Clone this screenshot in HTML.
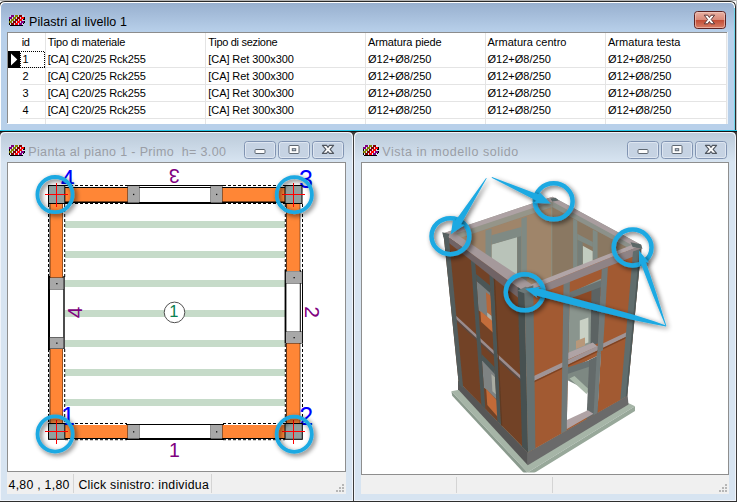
<!DOCTYPE html>
<html><head><meta charset="utf-8"><title>Pilastri al livello 1</title>
<style>
html,body{margin:0;padding:0;background:#fff;overflow:hidden}
#root{position:relative;width:737px;height:502px;overflow:hidden;font-family:'Liberation Sans',sans-serif}
#root svg{position:absolute;left:0;top:0}
.t{position:absolute;white-space:pre;line-height:1;font-family:'Liberation Sans',sans-serif}
</style></head><body><div id="root">
<svg width="737" height="502" viewBox="0 0 737 502">
<defs>
<linearGradient id="gTop" x1="0" y1="0" x2="0" y2="1"><stop offset="0" stop-color="#98b0cf"/><stop offset="1" stop-color="#b8d0ea"/></linearGradient>
<linearGradient id="gChild" x1="0" y1="0" x2="0" y2="1"><stop offset="0" stop-color="#bccbda"/><stop offset="1" stop-color="#d7e4f1"/></linearGradient>
<linearGradient id="gClose" x1="0" y1="0" x2="0" y2="1"><stop offset="0" stop-color="#e9b3a6"/><stop offset=".48" stop-color="#d98a79"/><stop offset=".5" stop-color="#c14a33"/><stop offset="1" stop-color="#d9826a"/></linearGradient>
<filter id="soft" x="-5%" y="-5%" width="110%" height="110%"><feGaussianBlur stdDeviation="0.55"/></filter>
<filter id="soft2" x="-20%" y="-20%" width="140%" height="140%"><feGaussianBlur stdDeviation="0.45"/></filter>
</defs>
<rect x="0" y="0" width="737" height="502" fill="#fff"/>
<rect x="0" y="0" width="737" height="1" fill="#b4b4b4"/>
<rect x="736" y="0" width="1" height="132" fill="#c0c0c0"/>
<path d="M-1,132 V7 Q-1,1 5,1 H730 Q736,1 736,7 V132 Z" fill="#2a2a2a"/>
<path d="M0,132 V7 Q0,2 5,2 H730 Q735,2 735,7 V132 Z" fill="#fff"/>
<path d="M1,131 V8 Q1,3 6,3 H729 Q734,3 734,8 V131 Z" fill="#b8d0ea"/>
<path d="M1,32 V8 Q1,3 6,3 H729 Q734,3 734,8 V32 Z" fill="url(#gTop)"/>
<rect x="734" y="8" width="1" height="123" fill="#6fd6ea"/>
<rect x="7" y="32" width="721" height="92" fill="#eef3f9"/>
<rect x="7" y="32" width="720" height="91" fill="#8c8c8c"/>
<rect x="8" y="33" width="719" height="91" fill="#fff"/>
<rect x="45" y="33" width="1" height="91" fill="#e4e4e4"/>
<rect x="205" y="33" width="1" height="91" fill="#e4e4e4"/>
<rect x="365" y="33" width="1" height="91" fill="#e4e4e4"/>
<rect x="485" y="33" width="1" height="91" fill="#e4e4e4"/>
<rect x="605" y="33" width="1" height="91" fill="#e4e4e4"/>
<rect x="726" y="33" width="1" height="91" fill="#e4e4e4"/>
<rect x="20" y="67" width="707" height="1" fill="#e4e4e4"/>
<rect x="20" y="84" width="707" height="1" fill="#e4e4e4"/>
<rect x="20" y="101" width="707" height="1" fill="#e4e4e4"/>
<rect x="20" y="118" width="707" height="1" fill="#e4e4e4"/>
<rect x="8" y="51" width="12" height="17" fill="#000"/>
<path d="M11,53.5 L17.3,59.5 L11,65.5 Z" fill="#fff"/>
<rect x="20.5" y="51.5" width="24" height="16" fill="none" stroke="#000" stroke-width="1" stroke-dasharray="1 1" shape-rendering="crispEdges"/>
<rect x="694.5" y="11.5" width="31" height="17" rx="3" fill="url(#gClose)" stroke="#5b2222" stroke-width="1"/>
<rect x="695.5" y="12.5" width="29" height="15" rx="2" fill="none" stroke="#f3cfc6" stroke-width="1" opacity=".6"/>
<path d="M704.2,15.2 l3.6,0 l1.6,2.3 l1.6,-2.3 l3.6,0 l-3.4,4.3 l3.4,4.3 l-3.6,0 l-1.6,-2.3 l-1.6,2.3 l-3.6,0 l3.4,-4.3 Z" fill="#fff" stroke="#5a3434" stroke-width="1" stroke-linejoin="round"/>
<rect x="10" y="15" width="14" height="10" fill="#e8f0f9" opacity=".5"/><rect x="11" y="15" width="3" height="2" fill="#800080"/><rect x="15" y="15" width="3" height="2" fill="#808000"/><rect x="19" y="15" width="3" height="2" fill="#800000"/><rect x="9" y="17" width="3" height="2" fill="#800080"/><rect x="13" y="17" width="3" height="2" fill="#808000"/><rect x="17" y="17" width="3" height="2" fill="#800000"/><rect x="21" y="17" width="3" height="2" fill="#ff0000"/><rect x="24" y="17" width="1" height="2" fill="#000"/><rect x="9" y="19" width="1" height="2" fill="#000"/><rect x="11" y="19" width="3" height="2" fill="#808000"/><rect x="15" y="19" width="3" height="2" fill="#800000"/><rect x="19" y="19" width="3" height="2" fill="#ff0000"/><rect x="23" y="19" width="2" height="1" fill="#000"/><rect x="9" y="21" width="3" height="2" fill="#808000"/><rect x="13" y="21" width="3" height="2" fill="#800000"/><rect x="17" y="21" width="3" height="2" fill="#ff0000"/><rect x="21" y="21" width="3" height="2" fill="#800080"/><rect x="24" y="21" width="1" height="2" fill="#000"/><rect x="9" y="23" width="1" height="2" fill="#000"/><rect x="11" y="23" width="3" height="2" fill="#800000"/><rect x="15" y="23" width="3" height="2" fill="#ff0000"/><rect x="19" y="23" width="3" height="2" fill="#800080"/><rect x="23" y="23" width="1" height="1" fill="#000"/><rect x="10" y="25" width="13" height="1" fill="#000"/>
<rect x="0" y="130" width="737" height="1" fill="#22c4e6"/>
<rect x="0" y="131" width="737" height="1" fill="#141010"/>
<rect x="-1" y="132" width="355" height="370" fill="#3c3c3c"/>
<path d="M0,501 V137 Q0,132 5,132 H348 Q353,132 353,137 V501 Z" fill="#f0f4fa"/>
<path d="M1,500 V138 Q1,133 6,133 H347 Q352,133 352,138 V500 Z" fill="#d7e4f1"/>
<path d="M1,162 V138 Q1,133 6,133 H347 Q352,133 352,138 V162 Z" fill="url(#gChild)"/>
<rect x="-1" y="501" width="355" height="1" fill="#2e2e2e"/>
<rect x="7" y="162" width="339" height="332" fill="#8e8e8e"/>
<rect x="8" y="163" width="337" height="308" fill="#fff"/>
<rect x="7" y="472" width="339" height="22" fill="#f0f0f0"/>
<rect x="244.5" y="141.5" width="31" height="17" rx="3" fill="#c6d3e3" stroke="#8194b2" stroke-width="1"/>
<rect x="245.5" y="142.5" width="29" height="15" rx="2" fill="none" stroke="#e3ebf4" stroke-width="1" opacity=".8"/>
<rect x="255.0" y="149.5" width="10" height="4" rx="1" fill="#fdfdfd" stroke="#5d6670" stroke-width="1"/>
<rect x="278.5" y="141.5" width="31" height="17" rx="3" fill="#c6d3e3" stroke="#8194b2" stroke-width="1"/>
<rect x="279.5" y="142.5" width="29" height="15" rx="2" fill="none" stroke="#e3ebf4" stroke-width="1" opacity=".8"/>
<rect x="289.0" y="145.5" width="10" height="8" rx="1" fill="#fdfdfd" stroke="#5d6670" stroke-width="1"/>
<rect x="292.3" y="148.7" width="3.4" height="2" fill="#c6d3e3" stroke="#5d6670" stroke-width="1"/>
<rect x="312.5" y="141.5" width="31" height="17" rx="3" fill="#c6d3e3" stroke="#8194b2" stroke-width="1"/>
<rect x="313.5" y="142.5" width="29" height="15" rx="2" fill="none" stroke="#e3ebf4" stroke-width="1" opacity=".8"/>
<path d="M322.4,145.4 l4.2,0 l1.4,1.9 l1.4,-1.9 l4.2,0 l-3.5,4.0 l3.5,4.0 l-4.2,0 l-1.4,-1.9 l-1.4,1.9 l-4.2,0 l3.5,-4.0 Z" fill="#fbfbfb" stroke="#50565f" stroke-width="1.1" stroke-linejoin="round"/>
<rect x="342" y="484" width="2" height="2" fill="#b6b6b6"/>
<rect x="339" y="487" width="2" height="2" fill="#b6b6b6"/>
<rect x="342" y="487" width="2" height="2" fill="#b6b6b6"/>
<rect x="336" y="490" width="2" height="2" fill="#b6b6b6"/>
<rect x="339" y="490" width="2" height="2" fill="#b6b6b6"/>
<rect x="342" y="490" width="2" height="2" fill="#b6b6b6"/>
<rect x="353" y="132" width="384" height="370" fill="#3c3c3c"/>
<path d="M354,501 V137 Q354,132 359,132 H731 Q736,132 736,137 V501 Z" fill="#f0f4fa"/>
<path d="M355,500 V138 Q355,133 360,133 H730 Q735,133 735,138 V500 Z" fill="#d7e4f1"/>
<path d="M355,162 V138 Q355,133 360,133 H730 Q735,133 735,138 V162 Z" fill="url(#gChild)"/>
<rect x="353" y="501" width="384" height="1" fill="#2e2e2e"/>
<rect x="361" y="162" width="368" height="332" fill="#8e8e8e"/>
<rect x="362" y="163" width="366" height="311" fill="#fff"/>
<rect x="361" y="475" width="368" height="19" fill="#f0f0f0"/>
<rect x="627.5" y="141.5" width="31" height="17" rx="3" fill="#c6d3e3" stroke="#8194b2" stroke-width="1"/>
<rect x="628.5" y="142.5" width="29" height="15" rx="2" fill="none" stroke="#e3ebf4" stroke-width="1" opacity=".8"/>
<rect x="638.0" y="149.5" width="10" height="4" rx="1" fill="#fdfdfd" stroke="#5d6670" stroke-width="1"/>
<rect x="661.5" y="141.5" width="31" height="17" rx="3" fill="#c6d3e3" stroke="#8194b2" stroke-width="1"/>
<rect x="662.5" y="142.5" width="29" height="15" rx="2" fill="none" stroke="#e3ebf4" stroke-width="1" opacity=".8"/>
<rect x="672.0" y="145.5" width="10" height="8" rx="1" fill="#fdfdfd" stroke="#5d6670" stroke-width="1"/>
<rect x="675.3" y="148.7" width="3.4" height="2" fill="#c6d3e3" stroke="#5d6670" stroke-width="1"/>
<rect x="695.5" y="141.5" width="31" height="17" rx="3" fill="#c6d3e3" stroke="#8194b2" stroke-width="1"/>
<rect x="696.5" y="142.5" width="29" height="15" rx="2" fill="none" stroke="#e3ebf4" stroke-width="1" opacity=".8"/>
<path d="M705.4,145.4 l4.2,0 l1.4,1.9 l1.4,-1.9 l4.2,0 l-3.5,4.0 l3.5,4.0 l-4.2,0 l-1.4,-1.9 l-1.4,1.9 l-4.2,0 l3.5,-4.0 Z" fill="#fbfbfb" stroke="#50565f" stroke-width="1.1" stroke-linejoin="round"/>
<rect x="725" y="484" width="2" height="2" fill="#b6b6b6"/>
<rect x="722" y="487" width="2" height="2" fill="#b6b6b6"/>
<rect x="725" y="487" width="2" height="2" fill="#b6b6b6"/>
<rect x="719" y="490" width="2" height="2" fill="#b6b6b6"/>
<rect x="722" y="490" width="2" height="2" fill="#b6b6b6"/>
<rect x="725" y="490" width="2" height="2" fill="#b6b6b6"/>
<rect x="10" y="145" width="14" height="10" fill="#e8f0f9" opacity=".5"/><rect x="11" y="145" width="3" height="2" fill="#800080"/><rect x="15" y="145" width="3" height="2" fill="#808000"/><rect x="19" y="145" width="3" height="2" fill="#800000"/><rect x="9" y="147" width="3" height="2" fill="#800080"/><rect x="13" y="147" width="3" height="2" fill="#808000"/><rect x="17" y="147" width="3" height="2" fill="#800000"/><rect x="21" y="147" width="3" height="2" fill="#ff0000"/><rect x="24" y="147" width="1" height="2" fill="#000"/><rect x="9" y="149" width="1" height="2" fill="#000"/><rect x="11" y="149" width="3" height="2" fill="#808000"/><rect x="15" y="149" width="3" height="2" fill="#800000"/><rect x="19" y="149" width="3" height="2" fill="#ff0000"/><rect x="23" y="149" width="2" height="1" fill="#000"/><rect x="9" y="151" width="3" height="2" fill="#808000"/><rect x="13" y="151" width="3" height="2" fill="#800000"/><rect x="17" y="151" width="3" height="2" fill="#ff0000"/><rect x="21" y="151" width="3" height="2" fill="#800080"/><rect x="24" y="151" width="1" height="2" fill="#000"/><rect x="9" y="153" width="1" height="2" fill="#000"/><rect x="11" y="153" width="3" height="2" fill="#800000"/><rect x="15" y="153" width="3" height="2" fill="#ff0000"/><rect x="19" y="153" width="3" height="2" fill="#800080"/><rect x="23" y="153" width="1" height="1" fill="#000"/><rect x="10" y="155" width="13" height="1" fill="#000"/>
<rect x="364" y="145" width="14" height="10" fill="#e8f0f9" opacity=".5"/><rect x="365" y="145" width="3" height="2" fill="#800080"/><rect x="369" y="145" width="3" height="2" fill="#808000"/><rect x="373" y="145" width="3" height="2" fill="#800000"/><rect x="363" y="147" width="3" height="2" fill="#800080"/><rect x="367" y="147" width="3" height="2" fill="#808000"/><rect x="371" y="147" width="3" height="2" fill="#800000"/><rect x="375" y="147" width="3" height="2" fill="#ff0000"/><rect x="378" y="147" width="1" height="2" fill="#000"/><rect x="363" y="149" width="1" height="2" fill="#000"/><rect x="365" y="149" width="3" height="2" fill="#808000"/><rect x="369" y="149" width="3" height="2" fill="#800000"/><rect x="373" y="149" width="3" height="2" fill="#ff0000"/><rect x="377" y="149" width="2" height="1" fill="#000"/><rect x="363" y="151" width="3" height="2" fill="#808000"/><rect x="367" y="151" width="3" height="2" fill="#800000"/><rect x="371" y="151" width="3" height="2" fill="#ff0000"/><rect x="375" y="151" width="3" height="2" fill="#800080"/><rect x="378" y="151" width="1" height="2" fill="#000"/><rect x="363" y="153" width="1" height="2" fill="#000"/><rect x="365" y="153" width="3" height="2" fill="#800000"/><rect x="369" y="153" width="3" height="2" fill="#ff0000"/><rect x="373" y="153" width="3" height="2" fill="#800080"/><rect x="377" y="153" width="1" height="1" fill="#000"/><rect x="364" y="155" width="13" height="1" fill="#000"/>
<rect x="73" y="474" width="1" height="19" fill="#d4d4d4"/>
<rect x="211" y="474" width="1" height="19" fill="#d4d4d4"/>
<rect x="456" y="477" width="1" height="16" fill="#d4d4d4"/>
<rect x="552" y="477" width="1" height="16" fill="#d4d4d4"/>
<defs><filter id="cshadow" x="-30%" y="-30%" width="160%" height="160%"><feGaussianBlur in="SourceAlpha" stdDeviation="2.4"/><feOffset dx="1.8" dy="2"/><feComponentTransfer><feFuncA type="linear" slope=".6"/></feComponentTransfer><feMerge><feMergeNode/><feMergeNode in="SourceGraphic"/></feMerge></filter></defs>
<g id="plan">
<rect x="65" y="221" width="220" height="7" fill="#c6dbc9"/>
<rect x="65" y="251" width="220" height="7" fill="#c6dbc9"/>
<rect x="65" y="280" width="220" height="7" fill="#c6dbc9"/>
<rect x="65" y="310" width="220" height="7" fill="#c6dbc9"/>
<rect x="65" y="340" width="220" height="7" fill="#c6dbc9"/>
<rect x="65" y="369" width="220" height="7" fill="#c6dbc9"/>
<rect x="65" y="399" width="220" height="7" fill="#c6dbc9"/>
<rect x="65" y="187" width="63" height="15.5" fill="#000" shape-rendering="crispEdges"/>
<rect x="65" y="188" width="63" height="13.5" fill="#ff8636"/>
<rect x="65" y="424.5" width="63" height="14" fill="#000" shape-rendering="crispEdges"/>
<rect x="65" y="425" width="63" height="13" fill="#ff8636"/>
<rect x="222" y="187" width="63" height="15.5" fill="#000" shape-rendering="crispEdges"/>
<rect x="222" y="188" width="63" height="13.5" fill="#ff8636"/>
<rect x="222" y="424.5" width="63" height="14" fill="#000" shape-rendering="crispEdges"/>
<rect x="222" y="425" width="63" height="13" fill="#ff8636"/>
<rect x="49.5" y="203" width="13.5" height="75" fill="#000"/>
<rect x="50.3" y="203" width="12.3" height="75" fill="#ff8636"/>
<rect x="49.5" y="348" width="13.5" height="75" fill="#000"/>
<rect x="50.3" y="348" width="12.3" height="75" fill="#ff8636"/>
<rect x="286" y="203" width="14.3" height="68" fill="#000"/>
<rect x="286.6" y="203" width="13.2" height="68" fill="#ff8636"/>
<rect x="286" y="343" width="14.3" height="80" fill="#000"/>
<rect x="286.6" y="343" width="13.2" height="80" fill="#ff8636"/>
<rect x="126" y="185" width="98" height="1" fill="#000" shape-rendering="crispEdges"/>
<rect x="139" y="187" width="72" height="1" fill="#000" shape-rendering="crispEdges"/>
<rect x="126" y="202" width="98" height="2" fill="#000" shape-rendering="crispEdges"/>
<rect x="126" y="424" width="98" height="1" fill="#000" shape-rendering="crispEdges"/>
<rect x="126" y="438" width="98" height="2" fill="#000" shape-rendering="crispEdges"/>
<rect x="48" y="276" width="2" height="74" fill="#000" shape-rendering="crispEdges"/>
<rect x="63.3" y="276" width="1.4" height="73" fill="#000"/>
<rect x="284.6" y="270" width="1.8" height="73.5" fill="#000"/>
<rect x="299.8" y="270" width="1" height="73.5" fill="#000"/>
<rect x="302" y="270" width="1" height="73.5" fill="#000"/>
<rect x="127.5" y="185.5" width="12" height="17.5" fill="#222"/>
<rect x="128" y="186" width="11" height="16.5" fill="#a8a8a8"/>
<rect x="133.0" y="193.8" width="1.3" height="1.3" fill="#111"/>
<rect x="210.5" y="185.5" width="12" height="17.5" fill="#222"/>
<rect x="211" y="186" width="11" height="16.5" fill="#a8a8a8"/>
<rect x="216.0" y="193.8" width="1.3" height="1.3" fill="#111"/>
<rect x="127.5" y="424.5" width="12" height="14.5" fill="#222"/>
<rect x="128" y="425" width="11" height="13.5" fill="#a8a8a8"/>
<rect x="133.0" y="431.2" width="1.3" height="1.3" fill="#111"/>
<rect x="210.5" y="424.5" width="12" height="14.5" fill="#222"/>
<rect x="211" y="425" width="11" height="13.5" fill="#a8a8a8"/>
<rect x="216.0" y="431.2" width="1.3" height="1.3" fill="#111"/>
<rect x="49.5" y="277.5" width="14.5" height="12" fill="#222"/>
<rect x="50" y="278" width="13.5" height="11" fill="#a8a8a8"/>
<rect x="56.2" y="283.0" width="1.3" height="1.3" fill="#111"/>
<rect x="49.5" y="337.0" width="14.5" height="12" fill="#222"/>
<rect x="50" y="337.5" width="13.5" height="11" fill="#a8a8a8"/>
<rect x="56.2" y="342.5" width="1.3" height="1.3" fill="#111"/>
<rect x="285.5" y="271.5" width="17" height="12" fill="#222"/>
<rect x="286" y="272" width="16" height="11" fill="#a8a8a8"/>
<rect x="293.5" y="277.0" width="1.3" height="1.3" fill="#111"/>
<rect x="285.5" y="331.5" width="17" height="12" fill="#222"/>
<rect x="286" y="332" width="16" height="11" fill="#a8a8a8"/>
<rect x="293.5" y="337.0" width="1.3" height="1.3" fill="#111"/>
<path d="M65,185.5 H127 M223,185.5 H285 M65,203.5 H127 M223,203.5 H285" stroke="#000" stroke-width="1" stroke-dasharray="3 2" fill="none"/>
<path d="M65,423.5 H127 M223,423.5 H285 M65,439.7 H127 M223,439.7 H285" stroke="#000" stroke-width="1" stroke-dasharray="3 2" fill="none"/>
<path d="M48.5,204 V277 M48.5,349 V423 M64.7,204 V277 M64.7,349 V423" stroke="#000" stroke-width="1" stroke-dasharray="3 2" fill="none"/>
<path d="M285.3,204 V270 M285.3,344 V423 M302.5,204 V270 M302.5,344 V423" stroke="#000" stroke-width="1" stroke-dasharray="3 2" fill="none"/>
<text x="60.8" y="187.8" font-family="Liberation Sans, sans-serif" font-size="25" fill="#0000ff">4</text>
<text x="299" y="187.8" font-family="Liberation Sans, sans-serif" font-size="25" fill="#0000ff">3</text>
<text x="61" y="425" font-family="Liberation Sans, sans-serif" font-size="25" fill="#0000ff">1</text>
<text x="299.2" y="425" font-family="Liberation Sans, sans-serif" font-size="25" fill="#0000ff">2</text>
<rect x="48.5" y="185.5" width="16.3" height="18" fill="#90a09f" stroke="#000" stroke-width="1"/>
<path d="M45.0,194.5 H67.5 M56.5,183.0 V206.5" stroke="#ff0000" stroke-width="1" fill="none" shape-rendering="crispEdges"/>
<rect x="285" y="185.5" width="17" height="18" fill="#90a09f" stroke="#000" stroke-width="1"/>
<path d="M282.0,194.5 H304.5 M293.5,183.0 V206.5" stroke="#ff0000" stroke-width="1" fill="none" shape-rendering="crispEdges"/>
<rect x="48.5" y="423.5" width="16.3" height="15.8" fill="#90a09f" stroke="#000" stroke-width="1"/>
<path d="M45.0,431.5 H67.5 M56.5,420.0 V443.5" stroke="#ff0000" stroke-width="1" fill="none" shape-rendering="crispEdges"/>
<rect x="285" y="423.5" width="17.3" height="15.8" fill="#90a09f" stroke="#000" stroke-width="1"/>
<path d="M282.0,431.5 H304.5 M293.5,420.0 V443.5" stroke="#ff0000" stroke-width="1" fill="none" shape-rendering="crispEdges"/>
<text x="174.5" y="456.7" font-family="Liberation Sans, sans-serif" font-size="19.5" fill="#800080" text-anchor="middle">1</text>
<text transform="translate(174.3,175.7) rotate(180)" x="0" y="7" font-family="Liberation Sans, sans-serif" font-size="19.5" fill="#800080" text-anchor="middle">3</text>
<text transform="translate(74.8,312.5) rotate(-90)" x="0" y="7.5" font-family="Liberation Sans, sans-serif" font-size="19.5" fill="#800080" text-anchor="middle" style="font-size:21px">4</text>
<text transform="translate(312.2,312) rotate(90)" x="0" y="7.5" font-family="Liberation Sans, sans-serif" font-size="19.5" fill="#800080" text-anchor="middle" style="font-size:21px">2</text>
<circle cx="174.5" cy="312.4" r="10.3" fill="#fff" stroke="#505050" stroke-width="1"/>
<text x="173.9" y="317" font-family="Liberation Sans, sans-serif" font-size="16.5" fill="#0a8050" text-anchor="middle">1</text>
<circle cx="55.0" cy="194.6" r="17.6" fill="none" stroke="#1fa9e2" stroke-width="3.8" filter="url(#cshadow)"/>
<circle cx="294.3" cy="194.7" r="17.6" fill="none" stroke="#1fa9e2" stroke-width="3.8" filter="url(#cshadow)"/>
<circle cx="55.1" cy="434" r="17.6" fill="none" stroke="#1fa9e2" stroke-width="3.8" filter="url(#cshadow)"/>
<circle cx="294.2" cy="434.2" r="17.6" fill="none" stroke="#1fa9e2" stroke-width="3.8" filter="url(#cshadow)"/>
</g>
<defs><clipPath id="cv"><rect x="362" y="163" width="366" height="309.5"/></clipPath></defs>
<g clip-path="url(#cv)">
<g id="solid" filter="url(#soft)">
<polygon points="451.4,391.3 527.6,472.5 635.0,406.3 560.0,370.0" fill="#a6b5a7" />
<polygon points="451.4,391.3 527.6,472.5 527.6,477.1 452.2,395.8" fill="#8a9a8d" />
<polygon points="527.6,472.5 635.0,406.3 635.0,411.0 527.6,477.1" fill="#98a89a" />
<polygon points="458.0,380.4 527.8,452.6 527.8,465.3 458.0,389.2" fill="#565656" />
<polygon points="527.8,452.6 627.6,395.6 628.5,404.5 527.8,465.3" fill="#6a6a6a" />
<polygon points="445.0,233.5 552.5,198.0 640.0,245.5 524.5,291.0" fill="#918070" />
<polygon points="461.4,237.6 552.0,207.0 552.0,300.0 470.0,300.0" fill="#9f856a" />
<polygon points="551.6,207.0 626.7,246.9 600.0,300.0 551.6,300.0" fill="#8a7862" />
<polygon points="491.5,244.6 517.2,236.5 517.2,290.0 491.5,275.0" fill="#b9c3b9" />
<polygon points="517.2,236.5 521.4,235.5 521.4,290.0 517.2,290.0" fill="#747e78" />
<polygon points="485.5,230.5 491.5,228.7 491.5,265.0 485.5,260.0" fill="#7f8a84" />
<polygon points="521.4,218.5 526.8,216.8 526.8,290.0 521.4,290.0" fill="#7f8a84" />
<polygon points="491.5,235.3 521.4,227.0 521.4,236.0 491.5,244.6" fill="#7f8a84" />
<polygon points="582.7,245.7 592.8,251.2 592.8,262.0 582.7,267.0" fill="#c2ccc0" />
<polygon points="577.3,239.7 582.7,242.6 582.7,268.0 577.3,268.0" fill="#747e78" />
<polygon points="573.1,218.5 577.3,220.7 577.3,270.0 573.1,270.0" fill="#7f8a84" />
<polygon points="592.8,229.5 597.6,232.0 597.6,258.0 592.8,260.0" fill="#7f8a84" />
<polygon points="577.3,233.7 592.8,242.0 592.8,247.0 577.3,239.7" fill="#7f8a84" />
<polygon points="551.2,207.0 552.2,207.0 552.2,284.0 551.2,284.0" fill="#8e8f80" />
<polygon points="443.5,233.5 524.5,288.5 528.0,452.5 458.5,381.5" fill="#724327" />
<polygon points="476.5,280.9 490.3,291.0 491.9,320.8 478.5,310.2" fill="#7a7f7f" />
<polygon points="485.9,292.2 490.6,295.7 491.7,316.1 487.1,312.5" fill="#b5673a" />
<polygon points="487.1,312.5 491.7,316.1 492.0,322.4 487.4,318.7" fill="#b3b0a4" />
<polygon points="480.4,310.9 493.9,322.3 494.5,334.1 481.1,321.7" fill="#c46d3a" />
<polygon points="481.9,359.5 494.7,371.0 496.2,399.3 483.8,387.3" fill="#7e8383" />
<polygon points="491.4,374.0 495.0,377.3 496.0,394.6 492.4,391.2" fill="#a9aca2" />
<polygon points="486.2,388.9 499.1,402.8 500.0,419.4 487.3,405.1" fill="#c26b39" />
<polygon points="476.0,273.9 490.0,285.5 490.4,293.3 476.5,280.9" fill="#4c5757" />
<polygon points="481.5,354.1 494.5,367.1 494.9,374.2 481.9,360.3" fill="#4c5757" />
<polygon points="455.2,315.1 521.2,375.9 521.4,380.7 455.6,319.6" fill="#9a8c8d" />
<polygon points="455.5,318.5 521.3,379.6 521.4,382.1 455.7,320.8" fill="#5a4840" />
<polygon points="470.7,257.8 475.1,260.8 485.3,408.8 481.4,404.9" fill="#4c5757" />
<polygon points="489.2,270.6 493.5,273.5 501.1,425.0 497.4,421.3" fill="#4c5757" />
<polygon points="493.5,273.5 494.8,274.5 502.3,426.2 501.1,425.0" fill="#5f3a24" />
<polygon points="524.5,288.5 641.5,245.5 627.2,396.0 528.0,452.5" fill="#a25a31" />
<polygon points="569.7,293.2 601.3,278.5 598.0,340.5 568.3,354.3" fill="#8a958e" />
<polygon points="570.2,297.0 600.6,285.5 600.6,296.0 591.5,303.7 579.8,303.7 570.2,303.0" fill="#8b4a28" />
<polygon points="579.8,320.6 588.4,317.5 588.4,342.6 579.8,345.5" fill="#c9d1c5" />
<polygon points="591.5,288.0 600.6,284.5 598.5,343.0 590.5,346.5" fill="#5b6363" />
<polygon points="576.0,341.0 585.0,337.5 585.0,345.5 576.0,349.0" fill="#b8987a" />
<polygon points="569.5,292.2 601.2,280.2 601.2,286.9 569.5,298.7" fill="#687272" />
<polygon points="567.6,353.0 592.8,342.6 597.5,346.5 568.1,359.6" fill="#afa3a5" />
<polygon points="533.9,376.0 627.1,332.1 626.7,336.6 534.0,380.9" fill="#a09496" />
<polygon points="534.0,380.9 626.7,336.6 626.6,338.1 534.0,382.5" fill="#7d4324" />
<polygon points="568.0,370.1 600.8,354.2 597.8,406.0 566.8,423.3" fill="#ffffff" />
<polygon points="566.0,371.0 589.0,361.0 589.0,391.0 566.0,379.5" fill="#7d8882" />
<polygon points="569.5,378.5 574.5,376.0 589.5,390.0 586.5,394.0" fill="#a9b8a9" />
<polygon points="567.5,367.5 599.5,356.8 599.5,363.3 567.5,374.0" fill="#687272" />
<polygon points="589.2,359.9 600.8,354.2 597.4,412.9 586.5,419.2" fill="#646a6a" />
<polygon points="565.8,420.4 587.8,410.3 593.5,413.7 566.6,429.2" fill="#b0a3a5" />
<polygon points="563.5,283.7 569.9,281.3 566.7,430.5 561.2,433.6" fill="#6f7979" />
<polygon points="601.8,269.2 607.9,266.9 602.9,350.2 597.3,352.9" fill="#6f7979" />
<polygon points="596.8,353.2 601.0,351.1 597.4,412.9 593.5,415.2" fill="#707a7a" />
<polygon points="443.5,233.3 552.5,196.8 552.4,207.0 461.4,237.6" fill="#959589" />
<polygon points="443.5,233.3 552.5,196.8 552.3,201.6 455.7,233.8" fill="#aea2a4" />
<polygon points="552.5,196.8 641.5,245.0 626.7,246.9 552.4,207.0" fill="#8c918a" />
<polygon points="552.5,196.8 641.5,245.0 631.8,244.9 552.3,201.6" fill="#a99d9f" />
<polygon points="443.5,233.3 524.5,292.3 524.5,302.7 443.9,238.9" fill="#6f6365" />
<polygon points="443.5,233.3 455.7,233.8 531.6,284.3 524.5,292.3" fill="#a5999b" />
<polygon points="524.5,292.3 641.5,245.0 641.5,253.3 524.5,300.1" fill="#8f8385" />
<polygon points="531.6,284.3 631.8,244.9 641.5,245.0 524.5,292.3" fill="#b1a5a7" />
<polygon points="443.6,235.0 448.9,238.6 463.3,389.1 458.8,384.5" fill="#525d5d" />
<polygon points="517.7,287.1 524.6,291.8 528.0,452.5 522.1,446.5" fill="#465151" />
<polygon points="524.5,288.5 533.3,285.3 535.4,448.3 528.0,452.5" fill="#657171" />
<polygon points="633.0,251.5 641.2,248.5 627.2,396.0 620.3,400.0" fill="#616d6d" />
<polygon points="639.5,249.2 641.2,248.5 627.2,396.0 625.7,396.8" fill="#4f5a5a" />
<polygon points="630.5,242.3 640.5,244.2 642.6,248.8 632.7,247.0" fill="#5c6767" />
<polygon points="550.2,198.4 555.6,197.8 558.8,200.4 552.3,201.4" fill="#5c6767" />
<polygon points="442.2,232.2 449.4,234.1 448.2,238.4 443.4,237.2" fill="#566161" />
<polygon points="517.5,290.8 525.5,286.8 533.2,289.4 524.8,293.6" fill="#6d7878" />
</g>
<g filter="url(#soft2)">
<ellipse cx="450.4" cy="236.2" rx="18.9" ry="18.0" fill="none" stroke="#1fa9e2" stroke-width="4.5" filter="url(#cshadow)"/>
<ellipse cx="553.7" cy="201.3" rx="18.9" ry="18.0" fill="none" stroke="#1fa9e2" stroke-width="4.5" filter="url(#cshadow)"/>
<ellipse cx="632.6" cy="247.5" rx="18.9" ry="18.0" fill="none" stroke="#1fa9e2" stroke-width="4.5" filter="url(#cshadow)"/>
<ellipse cx="524.6" cy="292.3" rx="18.9" ry="18.0" fill="none" stroke="#1fa9e2" stroke-width="4.5" filter="url(#cshadow)"/>
<g filter="url(#cshadow)">
<polygon points="486.1,177.9 455.2,221.0 453.3,218.0 450.8,234.2 464.4,225.1 460.8,224.6 486.7,178.3" fill="#1fa9e2" />
<polygon points="491.6,177.8 536.5,200.8 533.8,203.1 550.6,203.5 539.0,191.4 539.1,194.8 492.0,177.0" fill="#1fa9e2" />
<polygon points="666.1,325.5 653.5,321.1 634.5,315.1 602.5,305.9 563.9,295.4 538.2,288.4 540.2,287.0 525.2,288.8 537.3,297.8 536.3,295.6 562.1,302.2 600.8,312.1 633.2,319.9 652.7,324.0 665.9,326.5" fill="#1fa9e2" />
<polygon points="666.4,325.9 656.5,293.7 645.8,261.9 648.8,262.4 639.0,250.5 639.0,265.9 640.9,263.6 652.9,295.0 665.6,326.1" fill="#1fa9e2" />
</g>
</g>
</g>
</svg>
<div class="t" style="left:29.00px;top:16.42px;font-size:12.5px;color:#000;letter-spacing:0.101px">Pilastri al livello 1</div>
<div class="t" style="left:21.80px;top:36.69px;font-size:11px;color:#000;letter-spacing:-0.481px">id</div>
<div class="t" style="left:47.70px;top:36.69px;font-size:11px;color:#000;letter-spacing:-0.200px">Tipo di materiale</div>
<div class="t" style="left:208.30px;top:36.69px;font-size:11px;color:#000;letter-spacing:-0.306px">Tipo di sezione</div>
<div class="t" style="left:368.00px;top:36.69px;font-size:11px;color:#000;letter-spacing:-0.123px">Armatura piede</div>
<div class="t" style="left:487.50px;top:36.69px;font-size:11px;color:#000;letter-spacing:0.008px">Armatura centro</div>
<div class="t" style="left:608.00px;top:36.69px;font-size:11px;color:#000;letter-spacing:0.026px">Armatura testa</div>
<div class="t" style="left:22.50px;top:53.69px;font-size:11px;color:#000;letter-spacing:0.000px">1</div>
<div class="t" style="left:47.70px;top:53.69px;font-size:11px;color:#000;letter-spacing:-0.127px">[CA] C20/25 Rck255</div>
<div class="t" style="left:208.30px;top:53.69px;font-size:11px;color:#000;letter-spacing:-0.084px">[CA] Ret 300x300</div>
<div class="t" style="left:368.00px;top:53.69px;font-size:11px;color:#000;letter-spacing:0.019px">Ø12+Ø8/250</div>
<div class="t" style="left:487.50px;top:53.69px;font-size:11px;color:#000;letter-spacing:0.019px">Ø12+Ø8/250</div>
<div class="t" style="left:608.00px;top:53.69px;font-size:11px;color:#000;letter-spacing:0.019px">Ø12+Ø8/250</div>
<div class="t" style="left:22.50px;top:70.69px;font-size:11px;color:#000;letter-spacing:0.000px">2</div>
<div class="t" style="left:47.70px;top:70.69px;font-size:11px;color:#000;letter-spacing:-0.127px">[CA] C20/25 Rck255</div>
<div class="t" style="left:208.30px;top:70.69px;font-size:11px;color:#000;letter-spacing:-0.084px">[CA] Ret 300x300</div>
<div class="t" style="left:368.00px;top:70.69px;font-size:11px;color:#000;letter-spacing:0.019px">Ø12+Ø8/250</div>
<div class="t" style="left:487.50px;top:70.69px;font-size:11px;color:#000;letter-spacing:0.019px">Ø12+Ø8/250</div>
<div class="t" style="left:608.00px;top:70.69px;font-size:11px;color:#000;letter-spacing:0.019px">Ø12+Ø8/250</div>
<div class="t" style="left:22.50px;top:87.69px;font-size:11px;color:#000;letter-spacing:0.000px">3</div>
<div class="t" style="left:47.70px;top:87.69px;font-size:11px;color:#000;letter-spacing:-0.127px">[CA] C20/25 Rck255</div>
<div class="t" style="left:208.30px;top:87.69px;font-size:11px;color:#000;letter-spacing:-0.084px">[CA] Ret 300x300</div>
<div class="t" style="left:368.00px;top:87.69px;font-size:11px;color:#000;letter-spacing:0.019px">Ø12+Ø8/250</div>
<div class="t" style="left:487.50px;top:87.69px;font-size:11px;color:#000;letter-spacing:0.019px">Ø12+Ø8/250</div>
<div class="t" style="left:608.00px;top:87.69px;font-size:11px;color:#000;letter-spacing:0.019px">Ø12+Ø8/250</div>
<div class="t" style="left:22.50px;top:104.69px;font-size:11px;color:#000;letter-spacing:0.000px">4</div>
<div class="t" style="left:47.70px;top:104.69px;font-size:11px;color:#000;letter-spacing:-0.127px">[CA] C20/25 Rck255</div>
<div class="t" style="left:208.30px;top:104.69px;font-size:11px;color:#000;letter-spacing:-0.084px">[CA] Ret 300x300</div>
<div class="t" style="left:368.00px;top:104.69px;font-size:11px;color:#000;letter-spacing:0.019px">Ø12+Ø8/250</div>
<div class="t" style="left:487.50px;top:104.69px;font-size:11px;color:#000;letter-spacing:0.019px">Ø12+Ø8/250</div>
<div class="t" style="left:608.00px;top:104.69px;font-size:11px;color:#000;letter-spacing:0.019px">Ø12+Ø8/250</div>
<div class="t" style="left:28.30px;top:146.42px;font-size:12.5px;color:#9a9ea6;letter-spacing:0.356px">Pianta al piano 1 - Primo  h= 3.00</div>
<div class="t" style="left:382.30px;top:146.42px;font-size:12.5px;color:#9a9ea6;letter-spacing:0.537px">Vista in modello solido</div>
<div class="t" style="left:8.60px;top:478.59px;font-size:12.3px;color:#000;letter-spacing:0.261px">4,80 , 1,80</div>
<div class="t" style="left:78.50px;top:478.59px;font-size:12.3px;color:#000;letter-spacing:0.244px">Click sinistro: individua</div>
</div></body></html>
